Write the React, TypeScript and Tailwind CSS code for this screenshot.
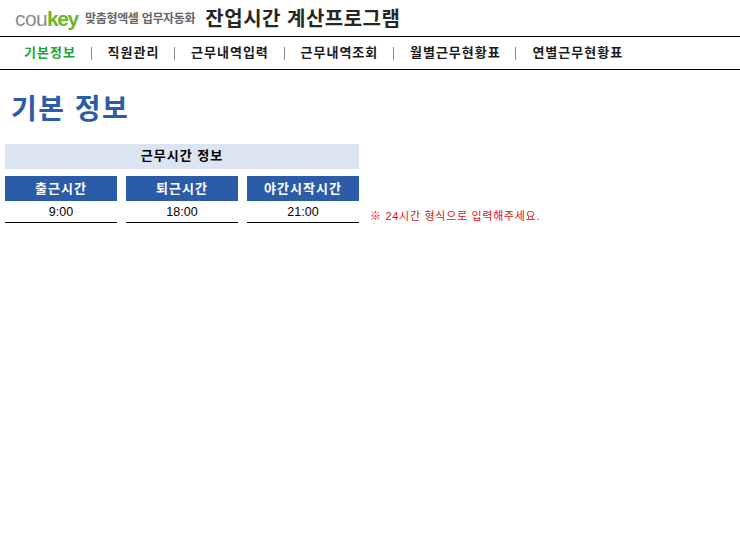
const fontStack = "font-['Liberation_Sans','Noto_Sans_CJK_KR',sans-serif]";

const navItems = ['기본정보', '직원관리', '근무내역입력', '근무내역조회', '월별근무현황표', '연별근무현황표'];

const timeColumns = [
  { label: '출근시간', value: '9:00' },
  { label: '퇴근시간', value: '18:00' },
  { label: '야간시작시간', value: '21:00' },
];

export default function App() {
  return (
    <div className={`${fontStack} min-h-[555px] bg-white text-black`}>
      {/* Header */}
      <div className="flex h-[36px] items-center pl-[15px]">
        <span className="text-[21px] leading-none tracking-[-0.6px]">
          <span className="text-[#8c8c8c]">cou</span>
          <span className="font-bold tracking-[-1.4px] text-[#6cb52d]">key</span>
        </span>
        <span className="ml-[7px] mt-[2px] text-[12px] font-bold tracking-[-0.3px] text-[#666666]">맞춤형엑셀 업무자동화</span>
        <span className="ml-[10px] mt-[1px] text-[20px] font-bold tracking-[0.5px] text-[#262626]">잔업시간 계산프로그램</span>
      </div>

      {/* Nav */}
      <nav className="flex h-[34px] items-center border-y border-black pl-[24px] text-[13px] font-bold tracking-[1px]">
        {navItems.map((item, i) => (
          <div key={item} className="flex items-center">
            {i > 0 && <span className="ml-[14.7px] mr-[16px] h-[13px] w-px bg-[#888888]" />}
            <span className={i === 0 ? 'text-[#22a03c]' : 'text-[#1a1a1a]'}>{item}</span>
          </div>
        ))}
      </nav>

      {/* Content */}
      <div className="px-[5px]">
        <h1 className="pl-[6px] pt-[20px] text-[28px] font-bold leading-[40px] tracking-[1.5px] text-[#2b5ca8]">기본 정보</h1>

        <div className="mt-[14px] flex items-end">
          <div className="w-[354px]">
            <div className="flex h-[25px] items-center justify-center bg-[#dbe5f1] pb-[1px] text-[13px] font-bold tracking-[1px]">근무시간 정보</div>
            <div className="mt-[7px] grid grid-cols-3 gap-x-[9px]">
              {timeColumns.map((col) => (
                <div key={col.label}>
                  <div className="flex h-[25px] items-center justify-center bg-[#2b5ca8] text-[13px] font-bold tracking-[1px] text-white">{col.label}</div>
                  <div className="flex h-[22px] items-center justify-center border-b border-black pt-[1px] text-[12.5px]">{col.value}</div>
                </div>
              ))}
            </div>
          </div>
          <span className="ml-[11px] text-[11px] leading-[14px] tracking-[0.7px] text-[#dd1020]">※ 24시간 형식으로 입력해주세요.</span>
        </div>
      </div>
    </div>
  );
}
